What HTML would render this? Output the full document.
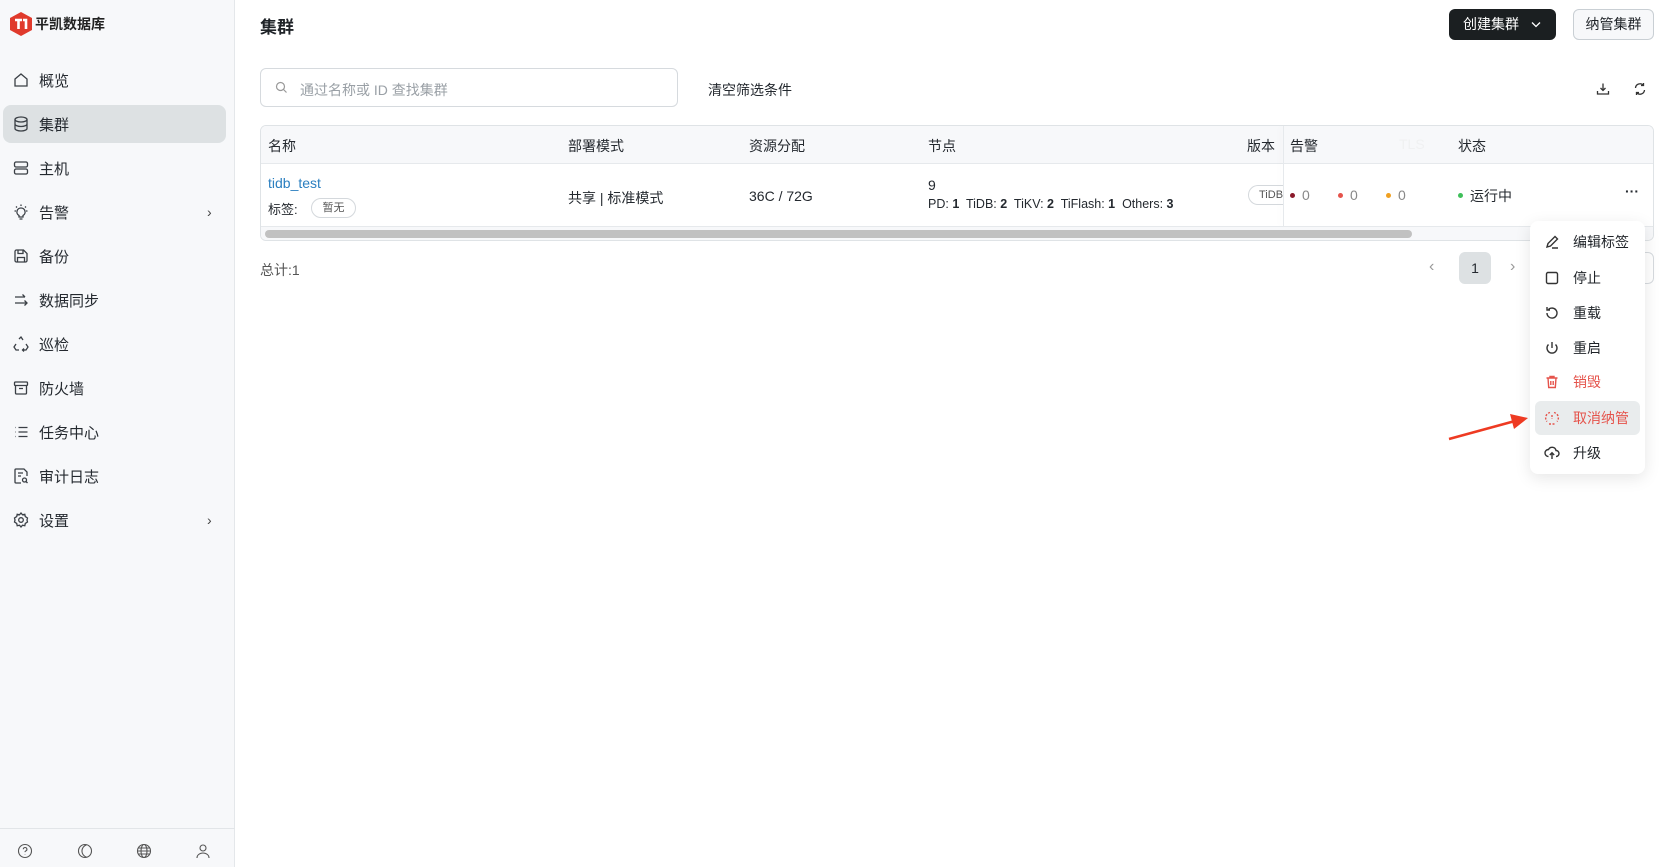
<!DOCTYPE html>
<html><head><meta charset="utf-8"><style>
*{box-sizing:border-box;margin:0;padding:0}
body{width:1675px;height:867px;overflow:hidden;background:#ffffff;font-family:"Liberation Sans","Noto Sans CJK SC",sans-serif;color:#1f2328;position:relative}
.abs{position:absolute}
.side{position:absolute;left:0;top:0;width:235px;height:867px;background:#f7f8fa;border-right:1px solid #e4e7ea}
.mi{position:absolute;left:3px;width:223px;height:38px;display:flex;align-items:center;font-size:15px;color:#24292f}
.mi svg{position:absolute;left:9px;width:18px;height:18px;fill:none;stroke:#3a3f45;stroke-width:1.3}
.mi span{position:absolute;left:36px}
.mi .ch{position:absolute;left:204px;font-size:14px;color:#444}
.active{background:#dde1e3;border-radius:8px}
.txt{position:absolute;white-space:nowrap}
.dd svg{width:16px;height:16px;fill:none;stroke:#333;stroke-width:1.4;position:absolute;left:14px}
.dd .it{position:absolute;left:0;width:115px;height:34px;display:flex;align-items:center;font-size:14px}
.dd .it span{position:absolute;left:43px}
</style></head><body>
<div class="side">
  <svg class="abs" style="left:10px;top:12px" width="22" height="24" viewBox="0 0 22 24"><polygon points="11,0 22,6 22,18 11,24 0,18 0,6" fill="#e03a2c"/><path d="M5 8h7M8.5 8v9M13 8h3v9" stroke="#fff" stroke-width="2.6" fill="none"/></svg>
  <div class="txt" style="left:35px;top:14px;font-size:14px;font-weight:bold;color:#222">平凯数据库</div>
  <div class="mi" style="top:61px"><svg viewBox="0 0 18 18"><path d="M3 8l6-5 6 5v7H3z"/></svg><span>概览</span></div>
  <div class="mi active" style="top:105px"><svg viewBox="0 0 18 18"><ellipse cx="9" cy="4.5" rx="6" ry="2.5"/><path d="M3 4.5v9c0 1.4 2.7 2.5 6 2.5s6-1.1 6-2.5v-9M3 9c0 1.4 2.7 2.5 6 2.5s6-1.1 6-2.5"/></svg><span>集群</span></div>
  <div class="mi" style="top:149px"><svg viewBox="0 0 18 18"><rect x="2.5" y="3" width="13" height="5" rx="1.5"/><rect x="2.5" y="10" width="13" height="5" rx="1.5"/></svg><span>主机</span></div>
  <div class="mi" style="top:193px"><svg viewBox="0 0 18 18"><path d="M9 5a4 4 0 0 0-2 7.5V14h4v-1.5A4 4 0 0 0 9 5zM7.5 16h3M9 1.5v1.5M2.5 8h1.5M14 8h1.5M4 3.5l1 1M14 3.5l-1 1"/></svg><span>告警</span><b class="ch" style="font-weight:normal">›</b></div>
  <div class="mi" style="top:237px"><svg viewBox="0 0 18 18"><path d="M3 4.5A1.5 1.5 0 0 1 4.5 3h7L15 6.5v7a1.5 1.5 0 0 1-1.5 1.5h-9A1.5 1.5 0 0 1 3 13.5zM6 3v3.5h5V3M5.5 15v-4.5h7V15"/></svg><span>备份</span></div>
  <div class="mi" style="top:281px"><svg viewBox="0 0 18 18"><path d="M3 6h10M10.5 3.5L13 6M3 12h12M12.5 9.5L15 12l-2.5 2.5"/></svg><span>数据同步</span></div>
  <div class="mi" style="top:325px"><svg viewBox="0 0 18 18"><path d="M7 4l2-2 2 3M4 9l-2 3 2 3h3M14 9l2 3-2 3h-3M12 13.5l-1.5 1.5 1.5 1.5"/></svg><span>巡检</span></div>
  <div class="mi" style="top:369px"><svg viewBox="0 0 18 18"><rect x="2.5" y="3" width="13" height="3.5" rx="1"/><path d="M3.5 6.5V14a1 1 0 0 0 1 1h9a1 1 0 0 0 1-1V6.5M7 9.5h4"/></svg><span>防火墙</span></div>
  <div class="mi" style="top:413px"><svg viewBox="0 0 18 18"><path d="M3 4.5h.5M3 9h.5M3 13.5h.5M6.5 4.5h9M6.5 9h9M6.5 13.5h9"/></svg><span>任务中心</span></div>
  <div class="mi" style="top:457px"><svg viewBox="0 0 18 18"><path d="M9 16H4a1 1 0 0 1-1-1V3a1 1 0 0 1 1-1h8l3 3v4M6 6h5M6 9h3"/><circle cx="12.5" cy="13" r="2"/><path d="M14 14.5l1.5 1.5"/></svg><span>审计日志</span></div>
  <div class="mi" style="top:501px"><svg viewBox="0 0 18 18"><circle cx="9" cy="9" r="2.3"/><path d="M9 2l1.5 1.8 2.3-.5.5 2.3L15.5 7 15 9l.5 2-2.2 1.4-.5 2.3-2.3-.5L9 16l-1.5-1.8-2.3.5-.5-2.3L2.5 11 3 9l-.5-2 2.2-1.4.5-2.3 2.3.5z"/></svg><span>设置</span><b class="ch" style="font-weight:normal">›</b></div>
  <div class="abs" style="left:0;top:828px;width:235px;border-top:1px solid #e2e5e8"></div>
  <svg class="abs" style="left:17px;top:843px" width="16" height="16" viewBox="0 0 16 16" fill="none" stroke="#555" stroke-width="1.1"><circle cx="8" cy="8" r="6.5"/><path d="M6.3 6.3a1.8 1.8 0 1 1 2.4 1.7c-.5.2-.7.6-.7 1.1M8 11.2v.4"/></svg>
  <svg class="abs" style="left:77px;top:843px" width="16" height="16" viewBox="0 0 16 16" fill="none" stroke="#555" stroke-width="1.1"><circle cx="8" cy="8" r="6.5"/><path d="M9.5 1.8a6.5 6.5 0 0 0 0 12.4"/></svg>
  <svg class="abs" style="left:136px;top:843px" width="16" height="16" viewBox="0 0 16 16" fill="none" stroke="#555" stroke-width="1.1"><circle cx="8" cy="8" r="6.5"/><ellipse cx="8" cy="8" rx="3" ry="6.5"/><path d="M1.5 8h13M2.5 5h11M2.5 11h11"/></svg>
  <svg class="abs" style="left:195px;top:843px" width="16" height="16" viewBox="0 0 16 16" fill="none" stroke="#555" stroke-width="1.1"><circle cx="8" cy="5" r="3"/><path d="M2 15c0-3 2.7-5 6-5s6 2 6 5"/></svg>
</div>

<div class="txt" style="left:260px;top:13px;font-size:17px;font-weight:bold">集群</div>
<div class="abs" style="left:1449px;top:9px;width:107px;height:31px;background:#1b1f21;border-radius:6px;color:#fff;font-size:14px;line-height:31px;padding-left:14px">创建集群<svg style="position:absolute;left:82px;top:12px" width="10" height="7" viewBox="0 0 10 7" fill="none" stroke="#fff" stroke-width="1.3"><path d="M1 1.5l4 4 4-4"/></svg></div>
<div class="abs" style="left:1573px;top:9px;width:81px;height:31px;border:1px solid #c9cfd4;border-radius:6px;background:#f7f8fa;font-size:14px;line-height:29px;text-align:center">纳管集群</div>

<div class="abs" style="left:260px;top:68px;width:418px;height:39px;border:1px solid #d6dade;border-radius:6px;background:#fff"></div>
<svg class="abs" style="left:275px;top:81px" width="13" height="13" viewBox="0 0 13 13" fill="none" stroke="#999" stroke-width="1.2"><circle cx="5.5" cy="5.5" r="4"/><path d="M8.5 8.5l3 3"/></svg>
<div class="txt" style="left:300px;top:80px;font-size:14px;color:#9aa0a6">通过名称或 ID 查找集群</div>
<div class="txt" style="left:708px;top:80px;font-size:14px;color:#24292f">清空筛选条件</div>
<svg class="abs" style="left:1596px;top:82px" width="14" height="14" viewBox="0 0 14 14" fill="none" stroke="#333" stroke-width="1.3"><path d="M7 1.5v7M4.5 6l2.5 2.5L9.5 6M1.5 9v3h11V9"/></svg>
<svg class="abs" style="left:1633px;top:82px" width="14" height="14" viewBox="0 0 14 14" fill="none" stroke="#333" stroke-width="1.3"><path d="M2.5 6a4.5 4.5 0 0 1 8-2.5M11.5 8a4.5 4.5 0 0 1-8 2.5M10.5 1v2.5H8M3.5 13v-2.5H6"/></svg>

<div class="abs" style="left:260px;top:125px;width:1394px;height:116px;border:1px solid #dfe3e6;border-radius:6px;background:#fff;overflow:hidden">
  <div class="abs" style="left:0;top:0;width:100%;height:38px;background:#f7f8fa;border-bottom:1px solid #e6e9ec"></div>
  <div class="abs" style="left:0;top:100px;width:100%;height:15px;background:#f7f8fa;border-top:1px solid #e6e9ec"></div>
  <div class="abs" style="left:4px;top:104px;width:1147px;height:8px;background:#c1c1c1;border-radius:4px"></div>
  <div class="abs" style="left:1022px;top:0;width:1px;height:100px;background:#e6e9ec;box-shadow:-3px 0 6px rgba(0,0,0,.06)"></div>
</div>
<div style="font-size:14px;color:#24292f">
<div class="txt" style="left:268px;top:136px">名称</div>
<div class="txt" style="left:568px;top:136px">部署模式</div>
<div class="txt" style="left:749px;top:136px">资源分配</div>
<div class="txt" style="left:928px;top:136px">节点</div>
<div class="txt" style="left:1247px;top:136px">版本</div>
<div class="txt" style="left:1290px;top:136px">告警</div>
<div class="txt" style="left:1399px;top:136px;color:#f0f1f2">TLS</div>
<div class="txt" style="left:1458px;top:136px">状态</div>
<div class="txt" style="left:268px;top:175px;color:#2b7fc0">tidb_test</div>
<div class="txt" style="left:268px;top:199px;font-size:13px">标签:</div>
<div class="abs" style="left:311px;top:198px;width:45px;height:20px;border:1px solid #d4d8dc;border-radius:10px;font-size:11px;line-height:18px;text-align:center;color:#555">暂无</div>
<div class="txt" style="left:568px;top:188px">共享 | 标准模式</div>
<div class="txt" style="left:749px;top:188px">36C / 72G</div>
<div class="txt" style="left:928px;top:177px">9</div>
<div class="txt" style="left:928px;top:197px;font-size:12.5px">PD: <b style="font-weight:600">1</b>&nbsp; TiDB: <b style="font-weight:600">2</b>&nbsp; TiKV: <b style="font-weight:600">2</b>&nbsp; TiFlash: <b style="font-weight:600">1</b>&nbsp; Others: <b style="font-weight:600">3</b></div>
<div class="abs" style="left:1248px;top:185px;width:35px;height:20px;border:1px solid #d4d8dc;border-right:none;border-radius:10px 0 0 10px;font-size:11px;line-height:18px;padding-left:10px;color:#555;overflow:hidden">TiDB</div>
<div class="abs" style="left:1290px;top:193px;width:5px;height:5px;border-radius:50%;background:#8b1a2b"></div>
<div class="txt" style="left:1302px;top:187px;color:#888">0</div>
<div class="abs" style="left:1338px;top:193px;width:5px;height:5px;border-radius:50%;background:#e5534b"></div>
<div class="txt" style="left:1350px;top:187px;color:#888">0</div>
<div class="abs" style="left:1386px;top:193px;width:5px;height:5px;border-radius:50%;background:#f0a020"></div>
<div class="txt" style="left:1398px;top:187px;color:#888">0</div>
<div class="abs" style="left:1458px;top:193px;width:5px;height:5px;border-radius:50%;background:#3fbf5a"></div>
<div class="txt" style="left:1470px;top:186px">运行中</div>
<div class="txt" style="left:1625px;top:183px;font-weight:bold">···</div>
<div class="txt" style="left:260px;top:260px;color:#555">总计:1</div>
<div class="txt" style="left:1429px;top:258px;color:#999;font-size:16px">‹</div>
<div class="abs" style="left:1459px;top:252px;width:32px;height:32px;background:#dde1e3;border-radius:6px;text-align:center;line-height:32px">1</div>
<div class="txt" style="left:1510px;top:258px;color:#999;font-size:16px">›</div>
<div class="abs" style="left:1600px;top:252px;width:54px;height:32px;border:1px solid #d6dade;border-radius:6px;background:#fff"></div>
</div>

<div class="abs dd" style="left:1530px;top:221px;width:115px;height:253px;background:#fff;border-radius:8px;box-shadow:0 4px 16px rgba(0,0,0,.1)">
  <div class="it" style="top:4px"><svg viewBox="0 0 16 16"><path d="M3 13l1-3.5L11 2.5l2.5 2.5L6.5 12zM8 14h6"/></svg><span>编辑标签</span></div>
  <div class="it" style="top:40px"><svg viewBox="0 0 16 16"><rect x="2.5" y="2.5" width="11" height="11" rx="1.5"/></svg><span>停止</span></div>
  <div class="it" style="top:75px"><svg viewBox="0 0 16 16"><path d="M3 8a5 5 0 1 0 1.5-3.5M3 2v3h3"/></svg><span>重载</span></div>
  <div class="it" style="top:110px"><svg viewBox="0 0 16 16"><path d="M8 2v6M4.5 4.5a5 5 0 1 0 7 0"/></svg><span>重启</span></div>
  <div class="it" style="top:144px;color:#e5534b"><svg viewBox="0 0 16 16" style="stroke:#e5534b"><path d="M2.5 4h11M6 4V2.5h4V4M4 4l.7 9.5h6.6L12 4M6.8 7v4M9.2 7v4"/></svg><span>销毁</span></div>
  <div class="it" style="top:180px;left:5px;width:105px;background:#e9eced;border-radius:6px;color:#e5534b"><svg viewBox="0 0 16 16" style="stroke:#e5534b;left:9px;stroke-dasharray:2 1.5"><path d="M6 2.5a5.5 5.5 0 0 0-3 9M10 2.5a5.5 5.5 0 0 1 3 9M5 14h6M8 5v4"/></svg><span style="left:38px">取消纳管</span></div>
  <div class="it" style="top:215px"><svg viewBox="0 0 16 16"><path d="M4.5 11.5a3.5 3.5 0 0 1 0-7 4 4 0 0 1 7.5 1 3 3 0 0 1 0 6M8 14V8M5.8 10L8 7.8 10.2 10"/></svg><span>升级</span></div>
</div>

<svg class="abs" style="left:1440px;top:410px" width="100" height="40" viewBox="0 0 100 40"><path d="M9 29L75 11" stroke="#ee3a22" stroke-width="2.5"/><polygon points="88,8 70,4 74,19" fill="#ee3a22"/></svg>
</body></html>
